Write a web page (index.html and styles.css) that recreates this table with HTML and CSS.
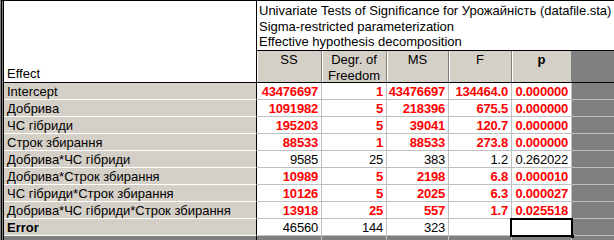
FILE: index.html
```html
<!DOCTYPE html>
<html>
<head>
<meta charset="utf-8">
<link rel="stylesheet" href="styles.css">
</head>
<body>
<div class="frame">
  <div class="sheet">
    <div class="corner">Effect</div>
    <div class="title">Univariate Tests of Significance for Урожайність (datafile.sta)<br>Sigma-restricted parameterization<br>Effective hypothesis decomposition</div>
    <div class="colhead">SS</div>
    <div class="colhead">Degr. of<br>Freedom</div>
    <div class="colhead">MS</div>
    <div class="colhead">F</div>
    <div class="colhead strong">p</div>
    <div class="pad"></div>

    <div class="label">Intercept</div>
    <div class="num sig">43476697</div><div class="num sig">1</div><div class="num sig">43476697</div><div class="num sig">134464.0</div><div class="num sig last">0.000000</div><div class="pad"></div>

    <div class="label">Добрива</div>
    <div class="num sig">1091982</div><div class="num sig">5</div><div class="num sig">218396</div><div class="num sig">675.5</div><div class="num sig last">0.000000</div><div class="pad"></div>

    <div class="label">ЧС гібриди</div>
    <div class="num sig">195203</div><div class="num sig">5</div><div class="num sig">39041</div><div class="num sig">120.7</div><div class="num sig last">0.000000</div><div class="pad"></div>

    <div class="label">Строк збирання</div>
    <div class="num sig">88533</div><div class="num sig">1</div><div class="num sig">88533</div><div class="num sig">273.8</div><div class="num sig last">0.000000</div><div class="pad"></div>

    <div class="label">Добрива*ЧС гібриди</div>
    <div class="num">9585</div><div class="num">25</div><div class="num">383</div><div class="num">1.2</div><div class="num last">0.262022</div><div class="pad"></div>

    <div class="label">Добрива*Строк збирання</div>
    <div class="num sig">10989</div><div class="num sig">5</div><div class="num sig">2198</div><div class="num sig">6.8</div><div class="num sig last">0.000010</div><div class="pad"></div>

    <div class="label">ЧС гібриди*Строк збирання</div>
    <div class="num sig">10126</div><div class="num sig">5</div><div class="num sig">2025</div><div class="num sig">6.3</div><div class="num sig last">0.000027</div><div class="pad"></div>

    <div class="label">Добрива*ЧС гібриди*Строк збирання</div>
    <div class="num sig">13918</div><div class="num sig">25</div><div class="num sig">557</div><div class="num sig">1.7</div><div class="num sig last">0.025518</div><div class="pad"></div>

    <div class="label strong">Error</div>
    <div class="num">46560</div><div class="num">144</div><div class="num">323</div><div class="num"></div><div class="num last selected"></div><div class="pad"></div>

    <div class="void first"></div><div class="void"></div><div class="void"></div><div class="void"></div><div class="void"></div><div class="void"></div><div class="void end"></div>
  </div>
</div>
</body>
</html>
```

FILE: styles.css
```css
html, body {
  margin: 0;
  padding: 0;
  background: #808080;
  overflow: hidden;
}

body {
  width: 614px;
  height: 240px;
  font-family: "Liberation Sans", Arial, sans-serif;
  font-size: 13px;
  color: #000;
}

.frame {
  height: 240px;
  border-left: 1px solid #808080;
  box-sizing: border-box;
}

.sheet {
  display: grid;
  grid-template-columns: 253px 65px 65px 62px 63px 60px 1fr;
  grid-template-rows: 50px 32px repeat(9, 17px) 4px;
  border-top: 1px solid #000;
  border-left: 3px double #000;
  background: #808080;
}

.corner {
  grid-row: span 2;
  background: #fff;
  border-right: 1px solid #000;
  border-bottom: 1px solid #000;
  display: flex;
  align-items: flex-end;
  padding-left: 3px;
  line-height: 16px;
}

.title {
  grid-column: span 6;
  background: #fff;
  border-bottom: 1px solid #000;
  padding: 2px 0 0 2px;
  line-height: 15.5px;
  white-space: nowrap;
}

.colhead {
  background: #d4d0c8;
  border-right: 1px solid #808080;
  border-bottom: 1px solid #000;
  box-shadow: inset 1px 0 0 #fff;
  text-align: center;
  padding-top: 1px;
  line-height: 16px;
}

.strong {
  font-weight: bold;
}

.pad {
  background: #808080;
  border-bottom: 1px solid #c0c0c0;
}

.colhead + .pad {
  border-bottom: 1px solid #000;
}

.label {
  background: #d4d0c8;
  border-right: 1px solid #000;
  border-bottom: 1px solid #fff;
  padding: 1px 0 0 3px;
  line-height: 16px;
  white-space: nowrap;
}

.num {
  background: #fff;
  border-right: 1px solid #c0c0c0;
  border-bottom: 1px solid #c0c0c0;
  text-align: right;
  padding: 1px 3px 0 0;
  line-height: 16px;
  letter-spacing: -0.2px;
  white-space: nowrap;
}

.num.last {
  border-right: 1px solid #c0c0c0;
}

.sig {
  color: #ff0000;
  font-weight: bold;
}

.selected {
  position: relative;
}

.selected::after {
  content: "";
  position: absolute;
  left: -2px;
  top: -1px;
  right: -2px;
  bottom: -2px;
  border: 2px solid #000;
  z-index: 2;
}

.selected::before {
  content: "";
  position: absolute;
  right: -3px;
  bottom: -3px;
  width: 3px;
  height: 3px;
  background: #000;
  z-index: 3;
}

.void {
  background: #808080;
  border-right: 1px solid #c0c0c0;
}

.void.first {
  border-right: 1px solid #000;
}

.void.end {
  border-right: none;
}
```
